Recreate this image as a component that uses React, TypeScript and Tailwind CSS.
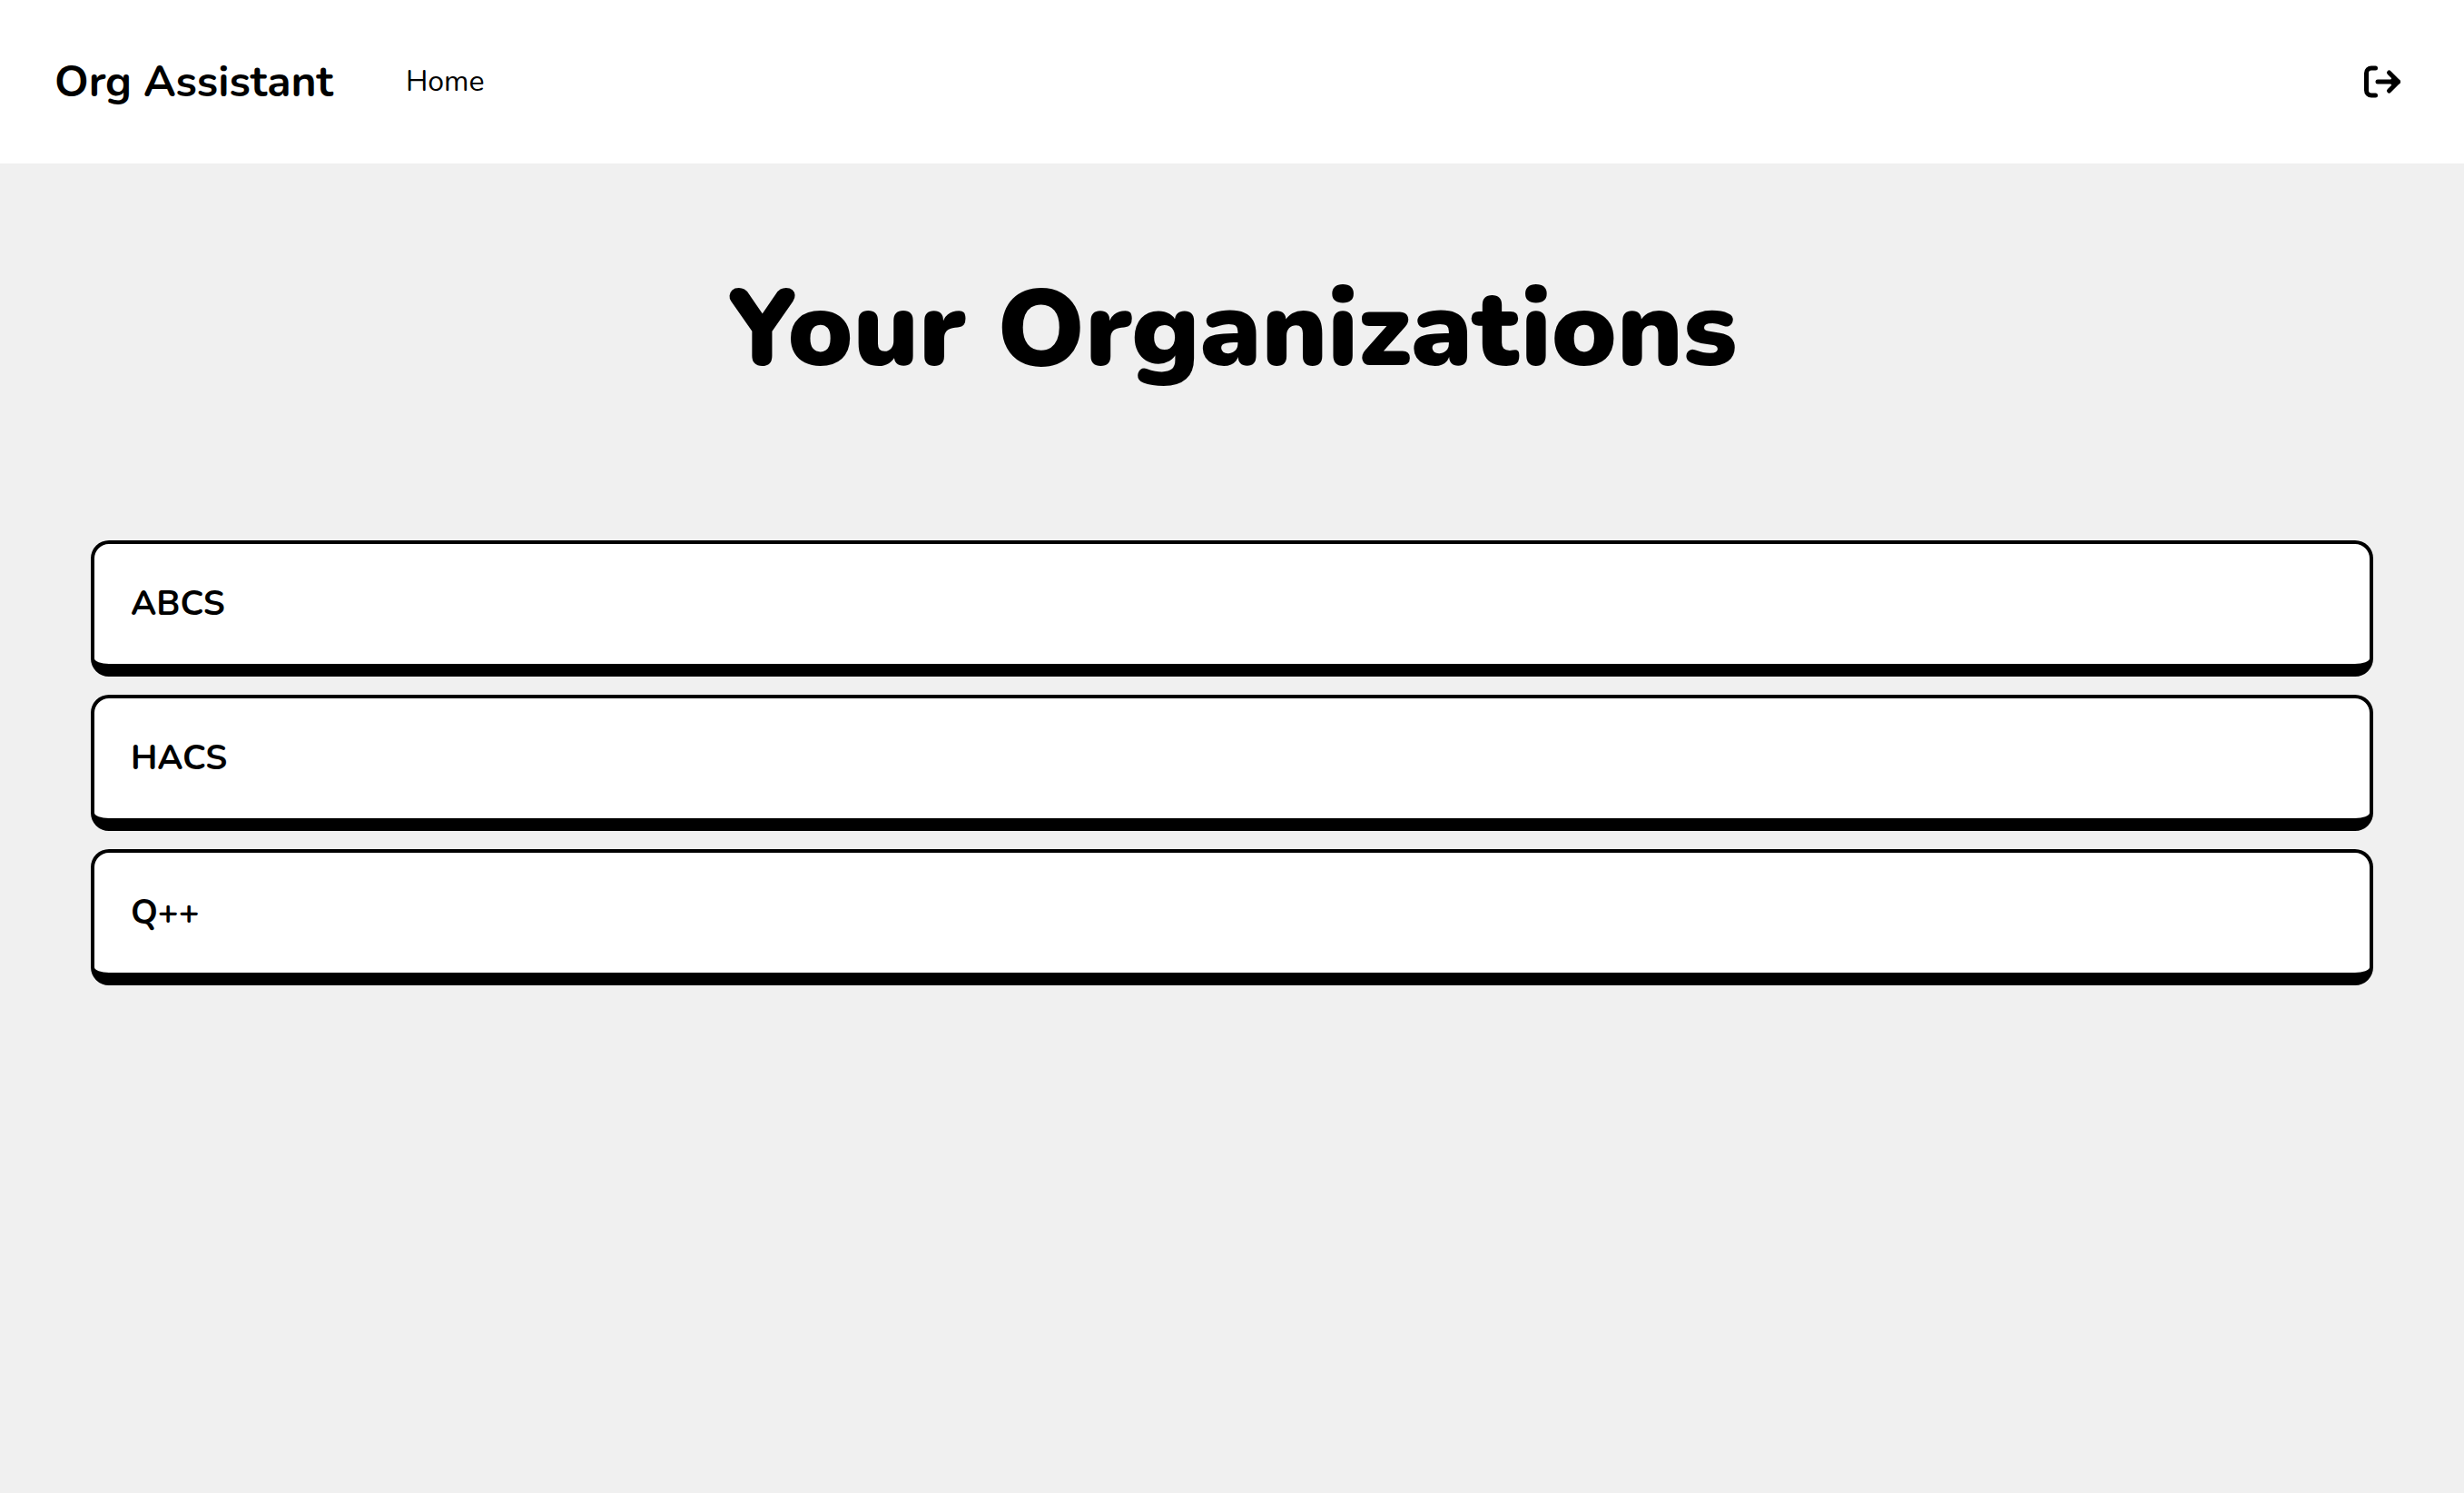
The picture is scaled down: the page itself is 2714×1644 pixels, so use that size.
const organizations = ["ABCS", "HACS", "Q++"];

function LogoutIcon() {
  return (
    <svg
      viewBox="0 0 48 40"
      className="h-10 w-12"
      fill="none"
      stroke="currentColor"
      strokeWidth="5"
      strokeLinecap="round"
      strokeLinejoin="round"
      aria-hidden="true"
    >
      <path d="M16.500 5H12a5.500 5.500 0 0 0-5.500 5.500v19A5.500 5.500 0 0 0 12 35h4.500" />
      <path d="M19 20h22.500" />
      <path d="M31.500 10l10 10-10 10M36 18l3 2-3 2" />
    </svg>
  );
}

export default function App() {
  return (
    <div className="min-h-screen bg-[#f0f0f0] font-['Nunito','Open_Sans',sans-serif] text-black">
      <header className="flex h-[180px] items-center justify-between bg-white px-[60px]">
        <nav className="flex items-center gap-20">
          <a href="#" className="text-5xl font-bold">
            Org Assistant
          </a>
          <a href="#" className="text-[32px] leading-[44px]">
            Home
          </a>
        </nav>
        <button type="button" aria-label="Log out" className="mr-1.5 cursor-pointer">
          <LogoutIcon />
        </button>
      </header>
      <main className="px-[100px] pt-[100px]">
        <h1 className="text-center text-[120px] leading-[166px] font-black">
          Your Organizations
        </h1>
        <ul className="mt-[149px] flex flex-col gap-5">
          {organizations.map((name) => (
            <li key={name}>
              <a
                href="#"
                className="flex h-[150px] items-center rounded-[20px] border-4 border-b-[14px] border-black bg-white px-10 text-[38px] leading-[52px] font-bold"
              >
                {name}
              </a>
            </li>
          ))}
        </ul>
      </main>
    </div>
  );
}
